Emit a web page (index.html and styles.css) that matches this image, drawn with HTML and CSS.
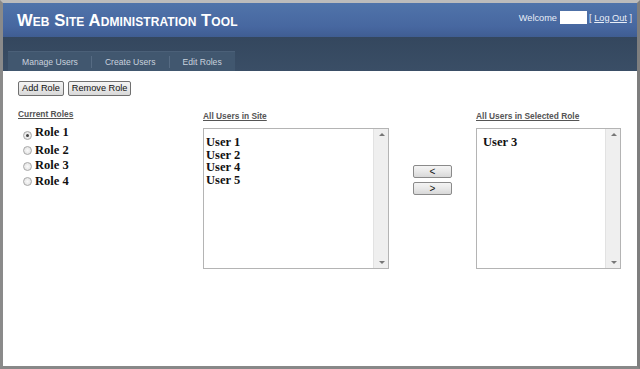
FILE: index.html
```html
<!DOCTYPE html>
<html>
<head>
<meta charset="utf-8">
<link rel="stylesheet" href="styles.css">
</head>
<body>
<div class="frame">
  <header class="header">
    <div class="title">Web Site Administration Tool</div>
    <div class="welcome">Welcome <span class="userbox"></span> [ <span class="logout">Log Out</span> ]</div>
  </header>
  <nav class="nav">
    <div class="tabs">
      <span class="tab">Manage Users</span>
      <span class="sep"></span>
      <span class="tab">Create Users</span>
      <span class="sep"></span>
      <span class="tab">Edit Roles</span>
    </div>
  </nav>
  <main class="content">
    <div class="toolbar">
      <button class="btn">Add Role</button>
      <button class="btn">Remove Role</button>
    </div>
    <div class="grid">
      <div class="col roles-col">
        <div class="label">Current Roles</div>
        <ul class="roles">
          <li class="role first"><span class="radio checked"></span>Role 1</li>
          <li class="role"><span class="radio"></span>Role 2</li>
          <li class="role"><span class="radio"></span>Role 3</li>
          <li class="role"><span class="radio"></span>Role 4</li>
        </ul>
      </div>
      <div class="col">
        <div class="label lower">All Users in Site</div>
        <div class="listbox">
          <div class="items">
            <div>User 1</div>
            <div>User 2</div>
            <div>User 4</div>
            <div>User 5</div>
          </div>
          <div class="scroll"><span class="arrow up"></span><span class="arrow down"></span></div>
        </div>
      </div>
      <div class="col move-col">
        <button class="btn move">&lt;</button>
        <button class="btn move">&gt;</button>
      </div>
      <div class="col">
        <div class="label lower">All Users in Selected Role</div>
        <div class="listbox narrow">
          <div class="items wide-pad">
            <div>User 3</div>
          </div>
          <div class="scroll"><span class="arrow up"></span><span class="arrow down"></span></div>
        </div>
      </div>
    </div>
  </main>
</div>
</body>
</html>
```

FILE: styles.css
```css
* { box-sizing: border-box; }
html, body { margin: 0; padding: 0; background: #fff; }
.frame {
  width: 640px;
  height: 369px;
  border-top: 3px solid #bcbcbc;
  border-left: 3px solid #8a8a8a;
  border-right: 3px solid #7e7e7e;
  border-bottom: 3px solid #888;
  background: #fff;
  display: flex;
  flex-direction: column;
  font-family: "Liberation Sans", Arial, sans-serif;
}
.header {
  height: 34px;
  flex-shrink: 0;
  background: linear-gradient(#5074aa, #4767a0 70%, #3f5d92);
  display: flex;
  justify-content: space-between;
  align-items: flex-start;
  padding: 0 5px 0 14px;
}
.title {
  color: #fff;
  font-weight: bold;
  font-size: 16.6px;
  font-variant: small-caps;
  letter-spacing: 0.1px;
  margin-top: 8px;
  white-space: nowrap;
}
.welcome {
  color: #e9eef7;
  font-size: 9.2px;
  margin-top: 8px;
  display: flex;
  align-items: center;
  white-space: pre;
}
.userbox {
  display: inline-block;
  width: 27px;
  height: 13px;
  background: #fff;
}
.logout { text-decoration: underline; }
.nav {
  height: 34px;
  flex-shrink: 0;
  background: linear-gradient(#34475e, #3a4e66);
  display: flex;
  align-items: flex-end;
  padding-left: 5px;
}
.tabs {
  height: 20px;
  background: #41576f;
  border-top: 1px solid #4b6078;
  display: flex;
  align-items: center;
  padding: 0 13px 0 14px;
  white-space: nowrap;
}
.tab {
  color: #c9d2de;
  font-size: 8.6px;
  white-space: nowrap;
}
.sep {
  width: 1px;
  height: 12px;
  background: #566b83;
  margin: 0 13px;
}
.content {
  flex: 1;
  padding: 10px 0 0 15px;
}
.toolbar { display: flex; gap: 4px; }
.btn {
  font-family: "Liberation Sans", Arial, sans-serif;
  font-size: 9.2px;
  color: #111;
  height: 15px;
  padding: 0 3px;
  border: 1px solid #707070;
  border-radius: 2px;
  background: linear-gradient(#f4f4f4, #e8e8e8 50%, #d8d8d8);
  line-height: 13px;
  margin: 0;
}
.grid {
  display: grid;
  grid-template-columns: 185px 186px 87px 145px;
  margin-top: 13px;
}
.label {
  font-size: 8.4px;
  font-weight: bold;
  color: #555;
  text-decoration: underline;
  height: 11px;
  line-height: 11px;
  white-space: nowrap;
}
.label.lower { margin-top: 2px; }
.roles {
  list-style: none;
  margin: 0;
  padding: 0 0 0 5px;
}
.role {
  font-family: "Liberation Serif", "Times New Roman", serif;
  font-weight: bold;
  font-size: 12.5px;
  height: 15.5px;
  display: flex;
  align-items: center;
  color: #111;
}
.role.first { margin-top: 5px; margin-bottom: 2px; }
.radio {
  width: 9px;
  height: 9px;
  border-radius: 50%;
  border: 1px solid #a8a8a8;
  background: radial-gradient(#fafafa, #dcdcdc);
  margin-right: 3px;
  margin-top: 1px;
  position: relative;
}
.radio.checked { margin-top: 5px; }
.radio.checked::after {
  content: "";
  position: absolute;
  left: 2px; top: 2px;
  width: 3px; height: 3px;
  border-radius: 50%;
  background: #444;
}
.listbox {
  margin-top: 6px;
  height: 141px;
  border: 1px solid #b4b4b4;
  display: flex;
  background: #fff;
}
.items {
  flex: 1;
  padding: 7px 0 0 2px;
  font-family: "Liberation Serif", "Times New Roman", serif;
  font-weight: bold;
  font-size: 12.5px;
  line-height: 12.7px;
  color: #111;
}
.items.wide-pad { padding-left: 6px; }
.scroll {
  width: 15px;
  background: #efefef;
  border-left: 1px solid #e2e2e2;
  position: relative;
}
.arrow {
  position: absolute;
  left: 5px;
  width: 0; height: 0;
  border-left: 3px solid transparent;
  border-right: 3px solid transparent;
}
.arrow.up { top: 4px; border-bottom: 3px solid #777; }
.arrow.down { bottom: 4px; border-top: 3px solid #777; }
.move-col {
  display: flex;
  flex-direction: column;
  align-items: flex-start;
  gap: 4px;
  padding-left: 24px;
  padding-top: 56px;
}
.btn.move {
  width: 39px;
  height: 13px;
  line-height: 11px;
  font-size: 10px;
  border-color: #8a8a8a;
}
```
